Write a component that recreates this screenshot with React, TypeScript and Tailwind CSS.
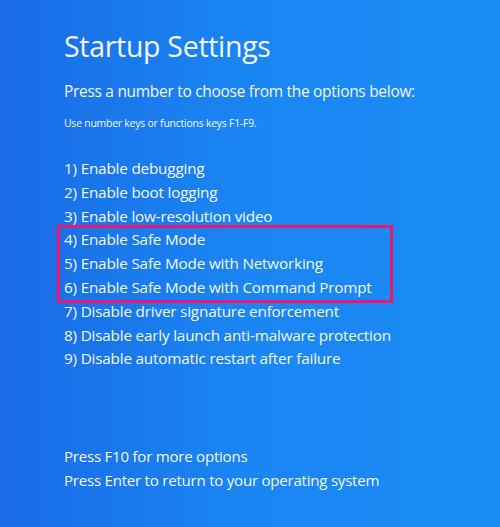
import React from 'react';

const options = [
  '1) Enable debugging',
  '2) Enable boot logging',
  '3) Enable low-resolution video',
  '4) Enable Safe Mode',
  '5) Enable Safe Mode with Networking',
  '6) Enable Safe Mode with Command Prompt',
  '7) Disable driver signature enforcement',
  '8) Disable early launch anti-malware protection',
  '9) Disable automatic restart after failure',
];

export default function App() {
  const top = options.slice(0, 3);
  const safe = options.slice(3, 6);
  const rest = options.slice(6);

  return (
    <div
      className="w-[500px] h-[527px] overflow-hidden bg-gradient-to-r from-[#1a6be6] via-[#1a86f3] to-[#1a8cf6] text-[#f2f7ff] pl-[64px] pt-[26px]"
      style={{ fontFamily: '"Open Sans", "Noto Sans", sans-serif' }}
    >
      <h1 className="text-[28.5px] leading-[40px] font-normal tracking-[-0.3px]">Startup Settings</h1>
      <p className="mt-[14px] text-[15.5px] leading-[22px] tracking-[-0.3px]">
        Press a number to choose from the options below:
      </p>
      <p className="mt-[14px] text-[10.4px] leading-[14px] tracking-[-0.2px]">
        Use number keys or functions keys F1-F9.
      </p>

      <ul className="mt-[27px] text-[15.3px] leading-[23.8px] tracking-[-0.2px]">
        {top.map((o) => (
          <li key={o}>{o}</li>
        ))}
        <li className="-ml-[7px] w-[336px] border-[3px] border-[#f01670] pl-[4px] -my-[3px] relative">
          <ul>
            {safe.map((o) => (
              <li key={o}>{o}</li>
            ))}
          </ul>
        </li>
        {rest.map((o) => (
          <li key={o}>{o}</li>
        ))}
      </ul>

      <div className="mt-[73px] text-[15.1px] leading-[24px] tracking-[-0.25px]">
        <p>Press F10 for more options</p>
        <p>Press Enter to return to your operating system</p>
      </div>
    </div>
  );
}
